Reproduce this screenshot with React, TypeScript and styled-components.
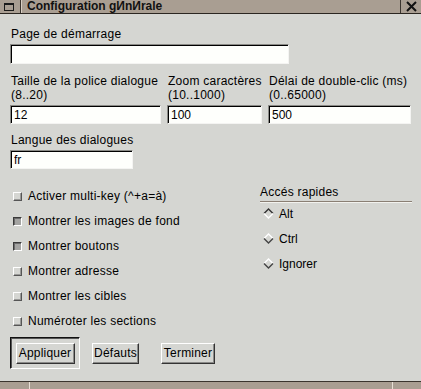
import React from 'react';
import styled, { createGlobalStyle } from 'styled-components';

const GlobalStyle = createGlobalStyle`
    html, body {
        margin: 0;
        padding: 0;
        background: #d5d6d2;
    }
    body {
        font-family: 'Liberation Sans', Arial, sans-serif;
        font-size: 12px;
        color: #000;
    }
`;

const tan = '#a99e92';
const face = '#d5d6d2';

// Window frame
const Window = styled.div`
    width: 421px;
    height: 389px;
    display: flex;
    flex-direction: column;
    background: ${face};
    overflow: hidden;
`;

const TitleBar = styled.div`
    height: 13px;
    display: flex;
    align-items: stretch;
    background: ${tan};
    border-bottom: 1px solid #2a2520;
`;

const MenuBox = styled.div`
    width: 20px;
    display: flex;
    align-items: center;
    justify-content: center;
    border-right: 1px solid #3a342e;
    box-shadow: 1px 0 0 #d8cfc4;
`;

const MenuGlyph = styled.div`
    width: 10px;
    height: 8px;
    border: 1px solid #1a1a1a;
    border-top-width: 2px;
    box-sizing: border-box;
    margin-left: -3px;
`;

const Title = styled.div`
    flex: 1;
    padding-left: 6px;
    font-weight: bold;
    font-size: 12px;
    line-height: 13px;
    color: #111;
`;

const CloseBox = styled.div`
    width: 20px;
    display: flex;
    align-items: center;
    justify-content: center;
    border-left: 1px solid #3a342e;
`;

const Body = styled.div`
    flex: 1;
    display: flex;
    flex-direction: column;
    padding: 13px 10px 0 10px;
`;

const BottomBar = styled.div`
    height: 7px;
    background: ${tan};
    border-top: 1px solid #3a342e;
    display: flex;
`;

const BottomSegment = styled.div<{ $w?: number }>`
    width: ${({ $w }) => ($w ? `${$w}px` : 'auto')};
    flex: ${({ $w }) => ($w ? 'none' : 1)};
    border-right: 1px solid #e8e0d6;
    &:last-child { border-right: none; }
`;

// Form parts
const Label = styled.div`
    line-height: 14px;
    padding-left: 1px;
    letter-spacing: 0.25px;
    white-space: nowrap;
`;

const TextInput = styled.input<{ $w: number; $h?: number }>`
    width: ${({ $w }) => $w}px;
    height: ${({ $h }) => $h ?? 19}px;
    box-sizing: border-box;
    margin: 0;
    padding: 0 3px;
    font-family: 'Liberation Sans', Arial, sans-serif;
    font-size: 12px;
    background: #fefffc;
    border: 1px solid;
    border-color: #8a8a86 #f4f4f2 #f4f4f2 #8a8a86;
    box-shadow: inset 1px 1px 0 #000;
    outline: none;
`;

const Field = styled.div<{ $mt?: number }>`
    display: flex;
    flex-direction: column;
    gap: 3px;
    margin-top: ${({ $mt }) => $mt ?? 0}px;
`;

const FieldRow = styled.div`
    display: flex;
    gap: 6px;
    margin-top: 10px;
`;

const Lower = styled.div`
    display: flex;
    margin-top: 14px;
`;

const CheckColumn = styled.div`
    width: 250px;
    display: flex;
    flex-direction: column;
`;

const CheckRow = styled.div`
    height: 25px;
    display: flex;
    align-items: center;
    gap: 6px;
    padding-left: 3px;
    letter-spacing: 0.25px;
`;

const CheckBox = styled.span<{ $on?: boolean }>`
    width: 9px;
    height: 9px;
    box-sizing: border-box;
    border: 1px solid;
    border-color: ${({ $on }) => ($on ? '#3a3a3a #fff #fff #3a3a3a' : '#fff #555 #555 #fff')};
    background: ${({ $on }) => ($on ? '#a4a4a2' : face)};
    box-shadow: ${({ $on }) => ($on ? 'inset 1px 1px 0 #6a6a6a' : 'inset -1px -1px 0 #9a9a98')};
    margin-top: 2px;
`;

const RadioColumn = styled.div`
    flex: 1;
    display: flex;
    flex-direction: column;
    margin-top: 2px;
`;

const GroupTitle = styled.div`
    line-height: 14px;
    letter-spacing: 0.25px;
    padding-bottom: 2px;
    margin-bottom: -1px;
    border-bottom: 1px solid #8a7f74;
    box-shadow: 0 1px 0 #f2f2ee;
    margin-right: -1px;
`;

const RadioRow = styled.div`
    height: 25px;
    display: flex;
    align-items: center;
    gap: 5px;
    padding-left: 3px;
`;

const ButtonRow = styled.div`
    display: flex;
    align-items: center;
    margin-top: 4px;
`;

const DefaultFrame = styled.div`
    width: 70px;
    height: 32px;
    box-sizing: border-box;
    display: flex;
    align-items: center;
    justify-content: center;
    border: 1px solid;
    border-color: #111 #fff #fff #111;
    box-shadow: inset 1px 1px 0 #555;
`;

const PushButton = styled.button<{ $w: number; $ml?: number }>`
    width: ${({ $w }) => $w}px;
    height: 21px;
    margin: 0 0 0 ${({ $ml }) => $ml ?? 0}px;
    padding: 0;
    box-sizing: border-box;
    font-family: 'Liberation Sans', Arial, sans-serif;
    font-size: 12px;
    letter-spacing: 0.2px;
    color: #000;
    background: ${face};
    border: 1px solid;
    border-color: #fff #333 #333 #fff;
    box-shadow: inset -1px -1px 0 #8a8a88;
`;

const Diamond = ({ on }: { on?: boolean }) => (
    <svg width="11" height="11" viewBox="0 0 11 11">
        <polygon points="5.5,1 10,5.5 5.5,10 1,5.5" fill={face} />
        <polyline points="1,5.5 5.5,1 10,5.5" fill="none" stroke={on ? '#333' : '#fff'} strokeWidth="1.4" />
        <polyline points="1,5.5 5.5,10 10,5.5" fill="none" stroke={on ? '#fff' : '#444'} strokeWidth="1.4" />
    </svg>
);

const checks = [
    { label: 'Activer multi-key (^+a=à)', on: false },
    { label: 'Montrer les images de fond', on: true },
    { label: 'Montrer boutons', on: true },
    { label: 'Montrer adresse', on: false },
    { label: 'Montrer les cibles', on: false },
    { label: 'Numéroter les sections', on: false },
];

const radios = [
    { label: 'Alt', on: true },
    { label: 'Ctrl', on: false },
    { label: 'Ignorer', on: false },
];

export default function App() {
    return (
        <>
            <GlobalStyle />
            <Window>
                <TitleBar>
                    <MenuBox>
                        <MenuGlyph />
                    </MenuBox>
                    <Title>Configuration gИnИrale</Title>
                    <CloseBox>
                        <svg width="13" height="11" viewBox="0 0 13 11">
                            <path d="M2 1 L11 10 M11 1 L2 10" stroke="#111" strokeWidth="2" />
                        </svg>
                    </CloseBox>
                </TitleBar>
                <Body>
                    <Field>
                        <Label>Page de démarrage</Label>
                        <TextInput $w={279} $h={20} defaultValue="" />
                    </Field>
                    <FieldRow>
                        <Field>
                            <Label>Taille de la police dialogue<br />(8..20)</Label>
                            <TextInput $w={151} defaultValue="12" />
                        </Field>
                        <Field>
                            <Label>Zoom caractères<br />(10..1000)</Label>
                            <TextInput $w={95} defaultValue="100" />
                        </Field>
                        <Field>
                            <Label>Délai de double-clic (ms)<br />(0..65000)</Label>
                            <TextInput $w={143} defaultValue="500" />
                        </Field>
                    </FieldRow>
                    <Field $mt={9}>
                        <Label>Langue des dialogues</Label>
                        <TextInput $w={123} defaultValue="fr" />
                    </Field>
                    <Lower>
                        <CheckColumn>
                            {checks.map((c) => (
                                <CheckRow key={c.label}>
                                    <CheckBox $on={c.on} />
                                    <span>{c.label}</span>
                                </CheckRow>
                            ))}
                        </CheckColumn>
                        <RadioColumn>
                            <GroupTitle>Accés rapides</GroupTitle>
                            {radios.map((r) => (
                                <RadioRow key={r.label}>
                                    <Diamond on={r.on} />
                                    <span>{r.label}</span>
                                </RadioRow>
                            ))}
                        </RadioColumn>
                    </Lower>
                    <ButtonRow>
                        <DefaultFrame>
                            <PushButton $w={59}>Appliquer</PushButton>
                        </DefaultFrame>
                        <PushButton $w={47} $ml={12}>Défauts</PushButton>
                        <PushButton $w={54} $ml={22}>Terminer</PushButton>
                    </ButtonRow>
                </Body>
                <BottomBar>
                    <BottomSegment $w={29} />
                    <BottomSegment />
                    <BottomSegment $w={28} />
                </BottomBar>
            </Window>
        </>
    );
}
